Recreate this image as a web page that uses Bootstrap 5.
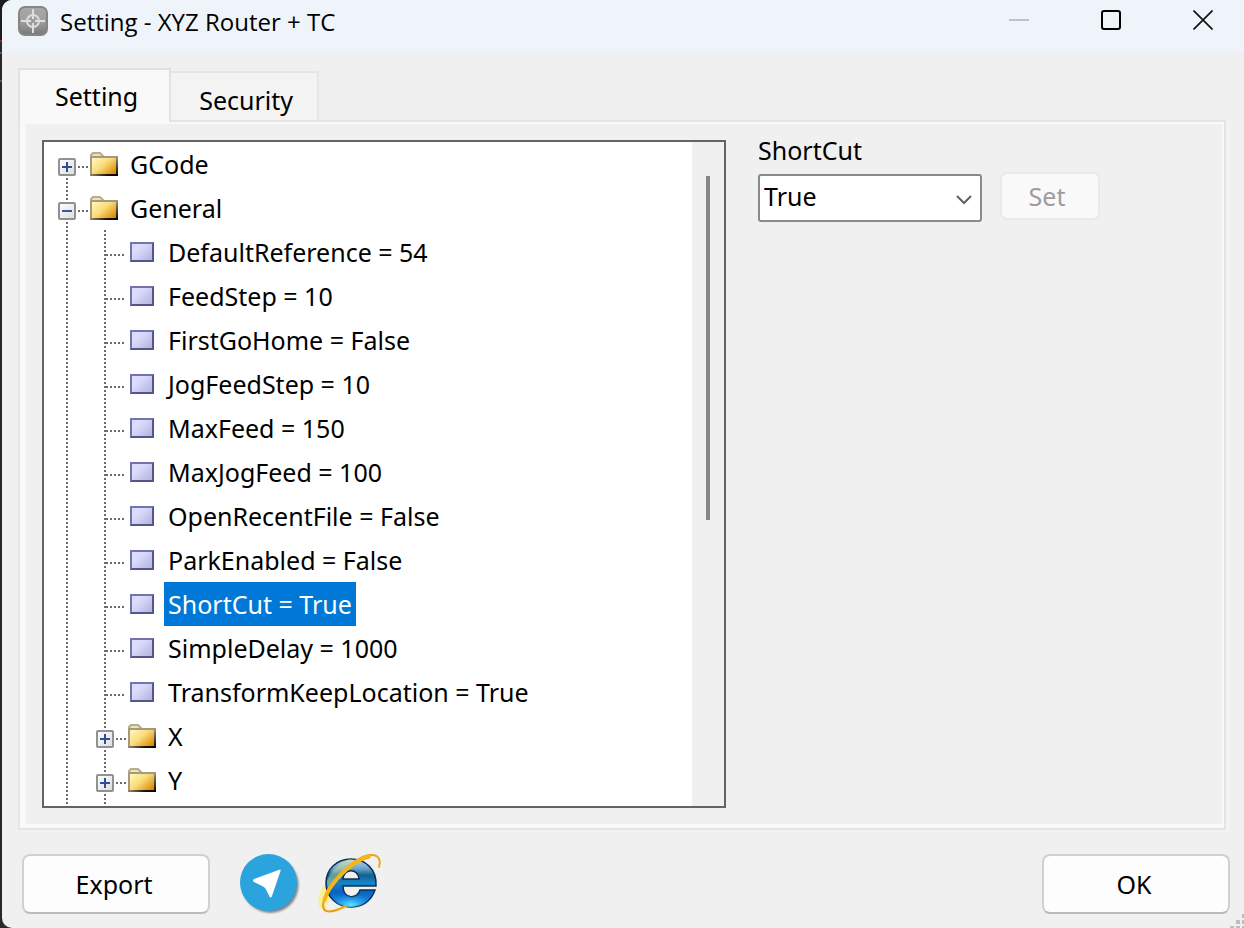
<!DOCTYPE html>
<html lang="en">
<head>
<meta charset="utf-8">
<meta name="viewport" content="width=device-width, initial-scale=1">
<title>Setting - XYZ Router + TC</title>
<link rel="stylesheet" href="https://cdn.jsdelivr.net/npm/bootstrap@5.3.0/dist/css/bootstrap.min.css">
<style>
  :root { --face: #f0f0f0; --line: #e5e5e5; --page: #f9f9f9; --frame: #646464; --pick: #0078d7; }
  body { font-family: "Noto Sans", "Open Sans", sans-serif; font-size: 25px; color: #000; background: linear-gradient(#1d1d1f 40px, #a51d20 40px 42px, #29292c 42px 52px, #55555a 52px 54px, #29292c 54px 80px, #55555a 80px 82px, #29292c 82px); }
  .app-window { margin-left: 2px; background: var(--face); border-radius: 10px 0 0 10px; }
  .title-bar { height: 52px; padding: 0 0 10px 16px; background: #eef4f9; }
  .title-text { font: 24px/32px "Open Sans", "Noto Sans", sans-serif; margin: 2px 0 0 12px; }
  .caption-set { margin-right: -5px; }
  .caption-btn { width: 92px; height: 40px; background: none; border: 0; padding: 0; line-height: 0; }

  .app-main { padding: 16px 18px 0 16px; }
  .page-tabs { border: 0; align-items: flex-end; }
  .page-tabs .nav-link { height: 49px; border: 2px solid var(--line); border-width: 2px 2px 0 0; border-radius: 0; margin: 0; padding: 7px 24px 0 28px; line-height: 40px; color: #000; background: #f3f3f3; }
  .page-tabs .nav-link.active { height: 54px; border-left-width: 2px; background: var(--page); color: #000; padding: 4px 31px 4px 35px; margin-bottom: -2px; position: relative; z-index: 1; line-height: 44px; }
  .tab-frame { border: 2px solid var(--line); background: var(--page); padding: 2px 2px 4px 6px; box-shadow: 4px 2px 0 #f3f3f3; }
  .tab-face { background: var(--face); padding: 16px; gap: 32px; }

  .tree-box { flex: 0 0 59%; max-width: 684px; border: 2px solid var(--frame); background: #fff; overflow: hidden; }
  .tree-scroll { width: 32px; background: var(--face); padding: 34px 14px 0; }
  .tree-thumb { height: 344px; background: #868686; }
  .tree-list { list-style: none; margin: 0; padding: 0 0 2px; background: repeating-linear-gradient(#6c6c6c 0 2px, transparent 2px 4px) no-repeat 22px 36px / 2px 100%; }
  .tree-list .tree-list { background-position: 60px 0; }
  .tree-row { height: 44px; line-height: 44px; padding-left: 14px; white-space: nowrap; }
  .tree-list .tree-list .tree-row { padding-left: 52px; }
  .tree-list .tree-list .leaf-row { padding-left: 62px; }
  .tree-toggle { width: 18px; height: 18px; margin-top: 6px; padding: 0; border: 0; background: #fff; display: flex; }
  .tree-dots { height: 2px; width: 10px; margin: 6px 2px 0; background: repeating-linear-gradient(90deg, #6c6c6c 0 2px, transparent 2px 4px); }
  .leaf-row .tree-dots { width: 20px; margin: 6px 4px 0 0; }
  .leaf-mark { width: 24px; height: 20px; border: 2px solid; border-color: #7474ac #55558a #55558a #7474ac; background: linear-gradient(135deg, #dcdcff 30%, #b4b4dc); }
  .tree-name { padding: 0 4px; margin-left: 8px; }
  .leaf-row .tree-name { margin-left: 10px; }
  .tree-name.picked { background: var(--pick); color: #fff; }

  .field-label { line-height: 20px; margin-bottom: 14px; }
  .value-select { width: 224px; height: 48px; padding: 0 36px 4px 4px; font-size: 25px; line-height: 40px; color: #000; border: 2px solid #8a8a8a; border-radius: 3px; background-color: #fff; background-position: right 8px top 18px; background-size: 16px 11px; background-image: url("data:image/svg+xml,%3Csvg xmlns='http://www.w3.org/2000/svg' viewBox='0 0 16 11'%3E%3Cpath d='M1 2l7 7 7-7' fill='none' stroke='%23606060' stroke-width='2'/%3E%3C/svg%3E"); }
  .set-btn, .set-btn:disabled { width: 100px; height: 48px; margin: 0 0 2px 18px; padding: 0 6px 0 0; font-size: 25px; line-height: 44px; color: #9d9d9d; background: #f9f9f9; border: 2px solid #e9e9e9; border-radius: 7px; opacity: 1; }

  .foot-bar { padding: 24px 14px 14px 20px; gap: 30px; }
  .foot-links { gap: 16px; line-height: 0; }
  .wide-btn { width: 188px; height: 60px; padding: 0 4px 0 0; font-size: 25px; line-height: 56px; color: #000; background: #fdfdfd; border: 2px solid #d0d0d0; border-bottom-color: #bababa; border-radius: 8px; }
  .size-grip { position: absolute; right: 0; bottom: 0; }
</style>
</head>
<body>
<svg width="0" height="0" class="position-absolute" aria-hidden="true">
  <defs>
    <linearGradient id="gBox" x1="0" y1="0" x2="1" y2="1"><stop offset="0" stop-color="#fff"/><stop offset="1" stop-color="#dcdcdc"/></linearGradient>
    <linearGradient id="gFold" x1="0" y1="0" x2="1" y2=".8"><stop offset="0" stop-color="#fffbc8"/><stop offset=".5" stop-color="#fbdc7c"/><stop offset="1" stop-color="#d98a00"/></linearGradient>
    <linearGradient id="gEdge" x1="0" y1="0" x2="1" y2="0"><stop offset="0" stop-color="#9a8a66"/><stop offset=".6" stop-color="#1c1400"/><stop offset="1" stop-color="#000"/></linearGradient>
    <linearGradient id="gSide" x1="0" y1="0" x2="0" y2="1"><stop offset="0" stop-color="#a59a7e"/><stop offset="1" stop-color="#000"/></linearGradient>
    <symbol id="plus" viewBox="0 0 18 18"><rect x="1" y="1" width="16" height="16" rx="1" fill="url(#gBox)" stroke="#919191" stroke-width="2"/><path d="M4 9h10M9 4v10" stroke="#2f4d96" stroke-width="2"/></symbol>
    <symbol id="minus" viewBox="0 0 18 18"><rect x="1" y="1" width="16" height="16" rx="1" fill="url(#gBox)" stroke="#919191" stroke-width="2"/><path d="M4 9h10" stroke="#3a55a8" stroke-width="2"/></symbol>
    <symbol id="folder" viewBox="0 0 28 24">
      <path d="M1 6V3l2-2h7l3 3v2" fill="#efe4ae" stroke="#b8ad90" stroke-width="2"/>
      <rect x="1" y="5" width="26" height="18" fill="url(#gFold)"/>
      <path d="M1 23V5h26" fill="none" stroke="#a59a7e" stroke-width="2"/>
      <path d="M26 4h2v20h-2z" fill="url(#gSide)"/><path d="M0 22h28v2H0z" fill="url(#gEdge)"/>
    </symbol>
  </defs>
</svg>

<div class="app-window d-flex flex-column min-vh-100 position-relative overflow-hidden">
  <header class="title-bar d-flex align-items-center">
    <svg width="30" height="30" viewBox="0 0 30 30" aria-hidden="true">
      <defs><linearGradient id="gApp" x1="0" y1="0" x2="0" y2="1"><stop offset="0" stop-color="#a8a8a8"/><stop offset=".5" stop-color="#a0a0a0"/><stop offset="1" stop-color="#777"/></linearGradient></defs>
      <rect x="1" y="1" width="28" height="28" rx="6" fill="url(#gApp)" stroke="#858585" stroke-width="2"/>
      <g fill="none" stroke="#dedede" stroke-width="2"><circle cx="15" cy="15" r="6"/><path d="M15 3v24M3 15h24"/></g>
      <circle cx="15" cy="15" r="2" fill="#999"/>
    </svg>
    <h1 class="title-text">Setting - XYZ Router + TC</h1>
    <div class="caption-set d-flex ms-auto align-self-start">
      <button class="caption-btn" type="button" aria-label="Minimize" disabled><svg width="20" height="20" viewBox="0 0 20 20"><path d="M0 10h20" stroke="#c0c2c6" stroke-width="2"/></svg></button>
      <button class="caption-btn" type="button" aria-label="Maximize"><svg width="20" height="20" viewBox="0 0 20 20"><rect x="1" y="1" width="18" height="18" rx="2" fill="none" stroke="#000" stroke-width="2"/></svg></button>
      <button class="caption-btn" type="button" aria-label="Close"><svg width="20" height="20" viewBox="0 0 20 20"><path d="M.5.5l19 19m0-19l-19 19" stroke="#111" stroke-width="1.7"/></svg></button>
    </div>
  </header>

  <main class="app-main flex-grow-1 d-flex flex-column">
    <ul class="nav nav-tabs page-tabs" role="tablist">
      <li class="nav-item" role="presentation"><button class="nav-link active" id="setting-tab" type="button" role="tab" data-bs-toggle="tab" data-bs-target="#setting-page" aria-controls="setting-page" aria-selected="true">Setting</button></li>
      <li class="nav-item" role="presentation"><button class="nav-link" type="button" role="tab" aria-selected="false">Security</button></li>
    </ul>
    <div class="tab-frame flex-grow-1 d-flex" id="setting-page" role="tabpanel" aria-labelledby="setting-tab">
      <div class="tab-face flex-grow-1 d-flex">
        <div class="tree-box d-flex">
          <ul class="tree-list flex-grow-1" role="tree" id="tree"></ul>
          <div class="tree-scroll" aria-hidden="true"><div class="tree-thumb"></div></div>
        </div>
        <form class="d-flex align-items-end align-self-start">
          <div class="d-flex flex-column">
            <label class="field-label" for="value">ShortCut</label>
            <select class="form-select value-select" id="value"><option>True</option><option>False</option></select>
          </div>
          <button class="btn set-btn" type="button" disabled>Set</button>
        </form>
      </div>
    </div>
  </main>

  <footer class="foot-bar d-flex align-items-center">
    <button class="btn wide-btn" type="button">Export</button>
    <div class="foot-links d-flex">
      <a href="#telegram" aria-label="Telegram">
        <svg width="62" height="60" viewBox="0 0 62 60">
          <defs><filter id="soft" x="-10%" y="-10%" width="130%" height="130%"><feGaussianBlur stdDeviation="1.2"/></filter></defs>
          <circle cx="30.500" cy="31" r="28" fill="#666" opacity=".8" filter="url(#soft)"/>
          <circle cx="28.500" cy="28.500" r="28.500" fill="#2ba3dd"/>
          <path d="M40 15.500L14 25q-2 1.500 0 3l9 4.500q2 1 3 3l3.500 7q1.500 2 2.500-.5L40.500 17q.5-1.500-.5-1.500z" fill="#fff"/>
        </svg>
      </a>
      <a href="#web" aria-label="Web site">
        <svg width="64" height="60" viewBox="0 0 64 60">
          <defs>
            <linearGradient id="gE" x1="0" y1="0" x2="0" y2="1"><stop offset="0" stop-color="#b4d9ee"/><stop offset=".2" stop-color="#6aa5c8"/><stop offset=".34" stop-color="#0f5f94"/><stop offset=".5" stop-color="#1686c4"/><stop offset=".68" stop-color="#0a62c0"/><stop offset="1" stop-color="#1c98ee"/></linearGradient>
            <radialGradient id="gGlow" cx=".5" cy=".9" r=".45"><stop offset="0" stop-color="#62e2ff"/><stop offset="1" stop-color="#159cf0" stop-opacity="0"/></radialGradient>
            <linearGradient id="gRing" x1="0" y1="1" x2="1" y2="0"><stop offset="0" stop-color="#e79a09"/><stop offset=".5" stop-color="#f9b51a"/><stop offset="1" stop-color="#e5a623"/></linearGradient>
          </defs>
          <path d="M5 32C-2 43-1 57 7 55l8-15 5-19z" fill="#f8f08c" opacity=".85"/>
          <path d="M58 32H25c0 14 15 13 17 4h15C53 48 43 53 33 53 19 53 8 43 8 29S19 5 33 5s26 10 25 27zM41 25c-1-11-15-11-16 0z" fill="url(#gE)" stroke="#0b3054" stroke-width="1.500"/>
          <path d="M58 32H25c0 14 15 13 17 4h15C53 48 43 53 33 53 19 53 8 43 8 29z" fill="url(#gGlow)"/>
          <path d="M9 27C13 17 21 9 31 5l8 1C26 14 15 28 10 38z" fill="#d8e08a" opacity=".45"/>
          <path d="M61 13c4-14-9-15-22-7C24 16 6 38 5 51c0 9 9 8 23 1" fill="none" stroke="url(#gRing)" stroke-width="2" stroke-linecap="round"/>
          <path d="M51 2.500C32 7 10 32 6.500 46" fill="none" stroke="#f8b31c" stroke-width="4" stroke-linecap="round"/>
        </svg>
      </a>
    </div>
    <button class="btn wide-btn ms-auto" type="submit">OK</button>
  </footer>

  <svg class="size-grip" width="14" height="16" viewBox="0 0 14 16" aria-hidden="true"><path d="M12 2h4v4h-4zM6 8h4v4H6zM12 8h4v4h-4zM0 14h4v4H0zM6 14h4v4H6zM12 14h4v4h-4z" fill="#bdbdbd"/></svg>
</div>

<script src="https://cdn.jsdelivr.net/npm/bootstrap@5.3.0/dist/js/bootstrap.bundle.min.js"></script>
<script>
  const settings = [
    { name: 'GCode' },
    { name: 'General', open: true, items: [
      'DefaultReference = 54', 'FeedStep = 10', 'FirstGoHome = False', 'JogFeedStep = 10', 'MaxFeed = 150',
      'MaxJogFeed = 100', 'OpenRecentFile = False', 'ParkEnabled = False', 'ShortCut = True',
      'SimpleDelay = 1000', 'TransformKeepLocation = True', { name: 'X' }, { name: 'Y' } ] }
  ];
  const selected = 'ShortCut = True';

  function leaf(text) {
    const on = text === selected;
    return `<li role="treeitem" aria-selected="${on}"><div class="tree-row leaf-row d-flex align-items-center"><span class="tree-dots"></span><span class="leaf-mark"></span><span class="tree-name${on ? ' picked' : ''}">${text}</span></div></li>`;
  }
  function folder(node) {
    const kids = node.open ? `<ul class="tree-list" role="group">${node.items.map(draw).join('')}</ul>` : '';
    return `<li role="treeitem" aria-expanded="${!!node.open}"><div class="tree-row d-flex align-items-center"><button class="tree-toggle" type="button" aria-label="Toggle ${node.name}"><svg width="18" height="18"><use href="#${node.open ? 'minus' : 'plus'}"/></svg></button><span class="tree-dots"></span><svg width="28" height="24"><use href="#folder"/></svg><span class="tree-name">${node.name}</span></div>${kids}</li>`;
  }
  function draw(node) { return typeof node === 'string' ? leaf(node) : folder(node); }
  document.getElementById('tree').innerHTML = settings.map(draw).join('');
</script>
</body>
</html>
